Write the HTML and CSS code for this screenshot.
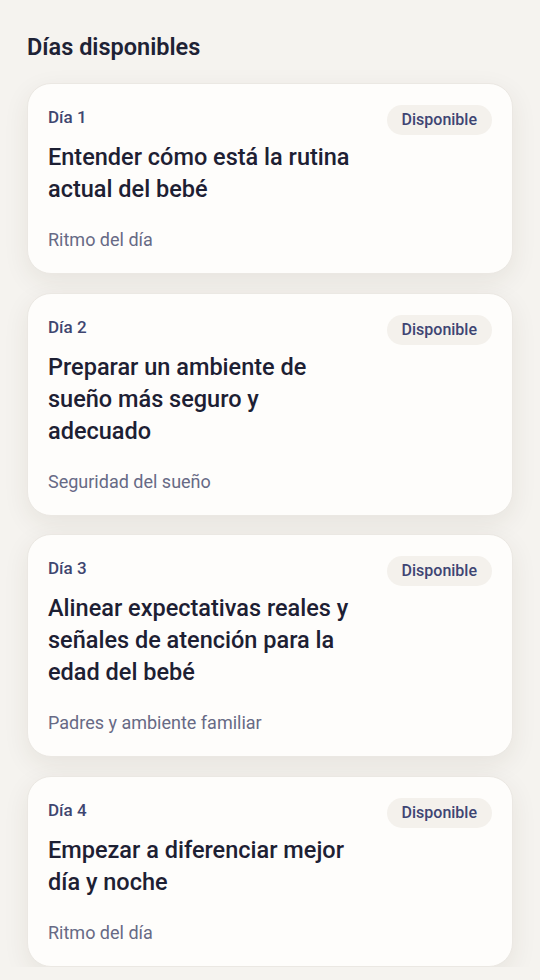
FILE: index.html
```html
<!DOCTYPE html>
<html lang="es">
<head>
    <meta charset="UTF-8">
    <meta name="viewport" content="width=device-width, initial-scale=1.0">
    <title>Días disponibles</title>
    <link rel="stylesheet" href="styles.css">
</head>
<body>
    <div class="page">
        <h2>Días disponibles</h2>
        <div class="day-list">
            <div class="day-card">
                <div class="day-info">
                    <div class="day-label">Día 1</div>
                    <div class="day-title">Entender cómo está la rutina actual del bebé</div>
                    <div class="day-tag">Ritmo del día</div>
                </div>
                <span class="badge">Disponible</span>
            </div>
            <div class="day-card">
                <div class="day-info">
                    <div class="day-label">Día 2</div>
                    <div class="day-title">Preparar un ambiente de sueño más seguro y adecuado</div>
                    <div class="day-tag">Seguridad del sueño</div>
                </div>
                <span class="badge">Disponible</span>
            </div>
            <div class="day-card">
                <div class="day-info">
                    <div class="day-label">Día 3</div>
                    <div class="day-title">Alinear expectativas reales y señales de atención para la edad del bebé</div>
                    <div class="day-tag">Padres y ambiente familiar</div>
                </div>
                <span class="badge">Disponible</span>
            </div>
            <div class="day-card">
                <div class="day-info">
                    <div class="day-label">Día 4</div>
                    <div class="day-title">Empezar a diferenciar mejor día y noche</div>
                    <div class="day-tag">Ritmo del día</div>
                </div>
                <span class="badge">Disponible</span>
            </div>
        </div>
    </div>
</body>
</html>
```

FILE: styles.css
```css
body {
    font-family: Roboto, "Noto Sans", sans-serif;
    background-color: #f5f3ef;
    margin: 0;
    color: #1d2033;
}
.page {
    padding: 32px 27px 0 27px;
}
h2 {
    margin: 0 0 21px 0;
    font-size: 23.5px;
    line-height: 30px;
    font-weight: 600;
    color: #1e2235;
}
.day-list {
    display: flex;
    flex-direction: column;
    gap: 18.5px;
}
.day-card {
    display: flex;
    align-items: flex-start;
    gap: 20px;
    background-color: #fefdfb;
    border: 1px solid #ebe8e3;
    border-radius: 24px;
    padding: 21px 20px 21px 20px;
    box-shadow: 0 8px 26px rgba(60, 50, 30, 0.08);
}
.day-info {
    flex: 1;
}
.day-label {
    font-size: 17px;
    line-height: 24px;
    font-weight: 500;
    color: #3f4670;
}
.day-title {
    margin-top: 12px;
    font-size: 23.5px;
    line-height: 32px;
    font-weight: 500;
    color: #1d2033;
}
.day-tag {
    margin-top: 23px;
    font-size: 18px;
    line-height: 24px;
    color: #676a85;
}
.badge {
    flex-shrink: 0;
    background-color: #f4f1ec;
    color: #3e4573;
    font-size: 16px;
    font-weight: 500;
    line-height: 30px;
    padding: 0 15px;
    border-radius: 15px;
}
```
